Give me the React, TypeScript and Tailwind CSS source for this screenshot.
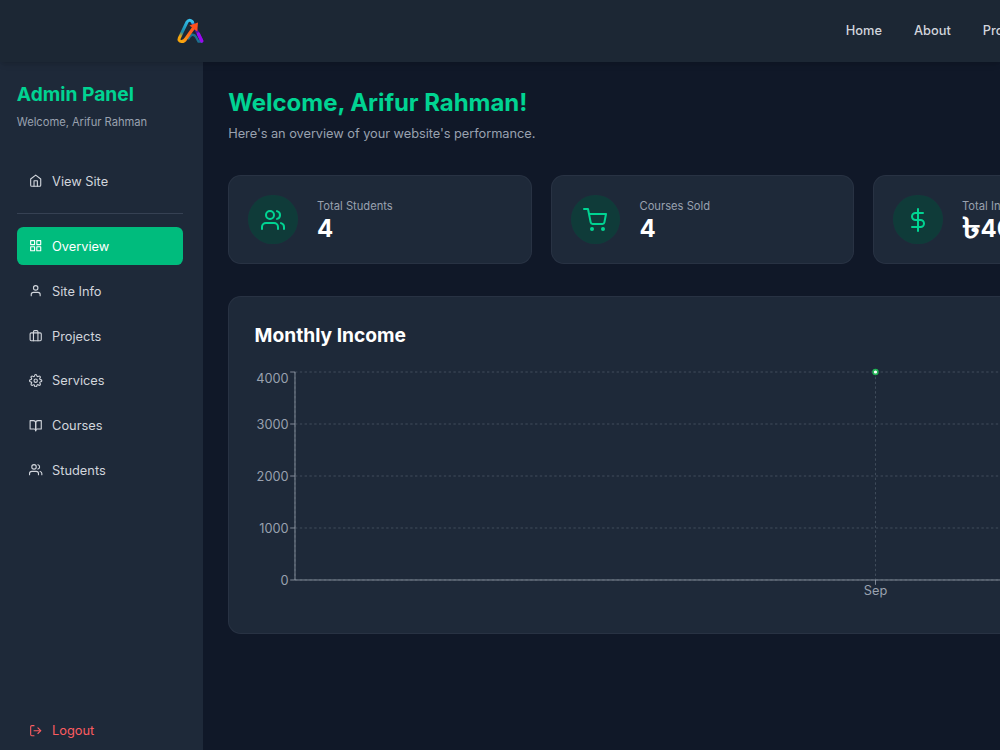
import type { IconType } from "react-icons";
import {
  FiBookOpen,
  FiBriefcase,
  FiDollarSign,
  FiGrid,
  FiHome,
  FiLogOut,
  FiSettings,
  FiShoppingCart,
  FiUser,
  FiUsers,
} from "react-icons/fi";

type NavLink = {
  title: string;
  icon: IconType;
  active?: boolean;
};

const menuLinks = ["Home", "About", "Projects", "Services"];

const navLinks: NavLink[] = [
  { title: "Overview", icon: FiGrid, active: true },
  { title: "Site Info", icon: FiUser },
  { title: "Projects", icon: FiBriefcase },
  { title: "Services", icon: FiSettings },
  { title: "Courses", icon: FiBookOpen },
  { title: "Students", icon: FiUsers },
];

const stats = [
  { label: "Total Students", value: "4", icon: FiUsers },
  { label: "Courses Sold", value: "4", icon: FiShoppingCart },
  { label: "Total Income", currency: "৳", value: "4000", icon: FiDollarSign },
  { label: "Total Projects", value: "6", icon: FiBriefcase },
];

const Logo = () => (
  <svg viewBox="0 0 28 27" className="h-[27px] w-[28px]" fill="none">
    <defs>
      <linearGradient id="left" x1="13" y1="1" x2="3" y2="24" gradientUnits="userSpaceOnUse">
        <stop offset="0" stopColor="#38c6f4" />
        <stop offset="0.6" stopColor="#1788a8" />
        <stop offset="0.8" stopColor="#f5a50b" />
      </linearGradient>
      <linearGradient id="right" x1="14" y1="3" x2="26" y2="24" gradientUnits="userSpaceOnUse">
        <stop offset="0" stopColor="#2ea6e0" />
        <stop offset="0.35" stopColor="#3a1a90" />
        <stop offset="1" stopColor="#9a08f0" />
      </linearGradient>
      <linearGradient id="arrow" x1="3" y1="24" x2="20" y2="6" gradientUnits="userSpaceOnUse">
        <stop offset="0" stopColor="#fbb00c" />
        <stop offset="0.5" stopColor="#ff6a1c" />
        <stop offset="1" stopColor="#ff4a1c" />
      </linearGradient>
    </defs>
    <path d="M15 3.5 24.8 23" stroke="url(#right)" strokeWidth="3" strokeLinecap="round" />
    <path d="M11.5 20.500c2-4.500 5.500-5 7.500-1.500l2.500 4.500h3" stroke="#1d6f8e" strokeWidth="2.4" strokeLinecap="round" />
    <path d="M24.8 23 21.5 16" stroke="#9a08f0" strokeWidth="3.2" strokeLinecap="round" />
    <path d="M15.5 4c-1.500-2.500-4-2.500-5.500 0L2.300 20c-.8 2 .2 3.500 2.200 3.500" stroke="url(#left)" strokeWidth="3" strokeLinecap="round" />
    <path d="M4.5 23.500c2 0 3.500-1 4.500-3L17.500 8.500" stroke="url(#arrow)" strokeWidth="3.2" />
    <path d="m21 4.500-8.600 3 7.800 6z" fill="#ff4f1d" />
  </svg>
);

const Header = () => (
  <header className="z-10 flex h-[62.4px] shrink-0 items-center justify-between bg-[#1c2734] pl-[177px] shadow-md">
    <Logo />
    <nav className="-mt-[2px] -mr-[118px] flex shrink-0 gap-8 text-[12.8px] font-medium text-gray-300">
      {menuLinks.map((title) => (
        <a key={title} href="#">
          {title}
        </a>
      ))}
    </nav>
  </header>
);

const SidebarItem = ({ title, icon: Icon, active }: NavLink) => (
  <a
    href="#"
    className={`flex h-[38.4px] shrink-0 items-center gap-[9.2px] rounded-[6.4px] px-[12.7px] ${
      active ? "bg-emerald-500 text-white" : "text-gray-300"
    }`}
  >
    <Icon className="size-[13.4px]" />
    <span className="pt-px">{title}</span>
  </a>
);

const Sidebar = () => (
  <aside className="flex w-[202.6px] shrink-0 flex-col bg-gray-800 pt-[19.6px] pr-[19.2px] pl-[16.8px] text-[12.8px] leading-[19.2px]">
    <h2 className="text-[19.2px] leading-[25.6px] font-bold text-emerald-400">Admin Panel</h2>
    <p className="mt-[6.4px] mb-8 text-[11.2px] leading-4 tracking-[-0.04px] text-gray-400">
      Welcome, Arifur Rahman
    </p>
    <SidebarItem title="View Site" icon={FiHome} />
    <hr className="mt-[12.4px] mb-[13.2px] border-gray-700" />
    <nav className="flex flex-col gap-[6.4px]">
      {navLinks.map((link) => (
        <SidebarItem key={link.title} {...link} />
      ))}
    </nav>
    <a
      href="#"
      className="mt-auto flex h-[38.4px] shrink-0 items-center gap-[9.2px] px-[12.7px] text-[#fb5c60]"
    >
      <FiLogOut className="size-[13.4px]" />
      Logout
    </a>
  </aside>
);

const StatCards = () => (
  <div className="grid grid-cols-4 gap-[19.2px]">
    {stats.map(({ label, currency, value, icon: Icon }) => (
      <div
        key={label}
        className="flex h-[89.6px] items-center gap-[19.2px] rounded-[12.8px] border border-gray-700/40 bg-gray-800 px-[19px]"
      >
        <div className="rounded-full bg-emerald-900/50 p-[12.8px] text-2xl text-emerald-400">
          <Icon />
        </div>
        <div className="pt-[0.8px]">
          <p className="text-[11.2px] leading-4 text-gray-400">{label}</p>
          <p className="flex h-[28.8px] items-baseline text-2xl leading-[30px] font-bold text-white">
            {currency && (
              <span className="mr-[4.5px] origin-left translate-y-[1px] scale-x-130 text-[29px] leading-[0]">
                {currency}
              </span>
            )}
            {value}
          </p>
        </div>
      </div>
    ))}
  </div>
);

// y positions are in chart units, the svg is drawn at 80%
const ticks = [
  { value: 4000, y: 5, labelY: 13 },
  { value: 3000, y: 70, labelY: 70.5 },
  { value: 2000, y: 135, labelY: 135.5 },
  { value: 1000, y: 200, labelY: 200.5 },
  { value: 0, y: 265, labelY: 265.5 },
];

const IncomeChart = () => (
  <svg viewBox="0 0 1522 300" className="mt-[19.2px] h-[240px] w-[1217.6px]">
    <g stroke="#4a5565" strokeDasharray="3 3">
      {ticks.map(({ value, y }) => (
        <line key={value} x1="50" x2="1502" y1={y} y2={y} />
      ))}
      <line x1="50" x2="50" y1="5" y2="265" />
      <line x1="775.6" x2="775.6" y1="5" y2="265" />
    </g>
    <g stroke="#99a1af">
      <path d="M50 5v260M50 265h1452M775.6 265v6" />
      {ticks.map(({ value, y }) => (
        <line key={value} x1="44" x2="50" y1={y} y2={y} />
      ))}
    </g>
    <g fill="#99a1af" fontSize="16">
      {ticks.map(({ value, labelY }) => (
        <text key={value} x="42" y={labelY} dy="0.355em" textAnchor="end">
          {value}
        </text>
      ))}
      <text x="775.6" y="273" dy="0.71em" textAnchor="middle">
        Sep
      </text>
    </g>
    <circle cx="775.6" cy="5" r="3" fill="#fff" stroke="#22b455" strokeWidth="2" />
  </svg>
);

const App = () => (
  <div className="flex h-[750px] w-[1000px] flex-col overflow-hidden bg-gray-900 font-['Inter',sans-serif]">
    <Header />
    <div className="flex min-h-0 flex-1">
      <Sidebar />
      <main className="w-[1322px] shrink-0 px-[25.6px] pt-[26px]">
        <h1 className="pt-[0.4px] text-2xl leading-[28.8px] font-bold tracking-[-0.05px] text-emerald-400">
          Welcome, Arifur Rahman!
        </h1>
        <p className="mt-[6.4px] mb-[31.6px] text-[12.8px] leading-[19.2px] tracking-[-0.04px] text-gray-400">
          Here's an overview of your website's performance.
        </p>
        <StatCards />
        <div className="mt-8 h-[338px] rounded-[12.8px] border border-gray-700/40 bg-gray-800 p-[25.4px]">
          <h3 className="text-[19.2px] leading-[25.6px] font-bold text-white">Monthly Income</h3>
          <IncomeChart />
        </div>
      </main>
    </div>
  </div>
);

export default App;
